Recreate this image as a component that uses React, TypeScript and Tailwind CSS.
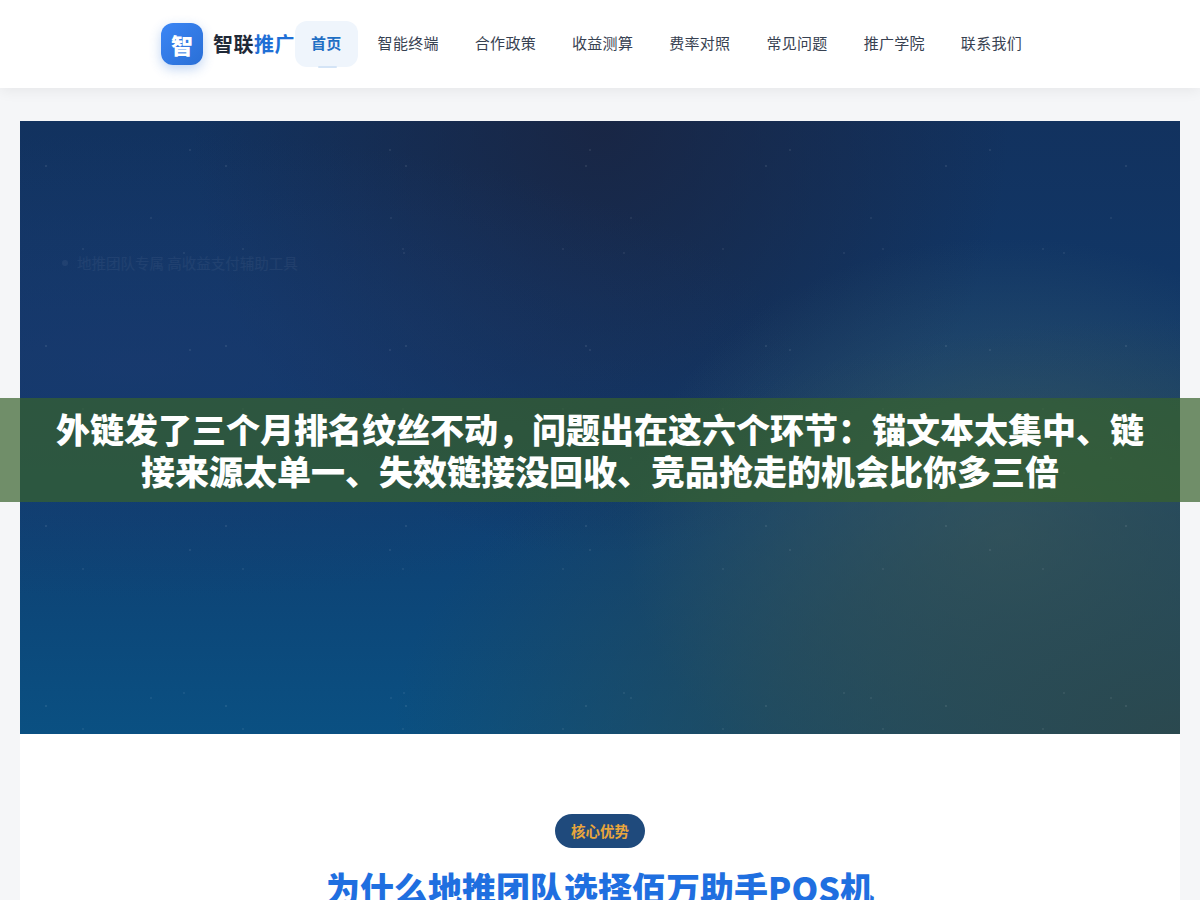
const font = "font-['Noto_Sans_CJK_SC','Noto_Sans',sans-serif]";

const navItems = ["智能终端", "合作政策", "收益测算", "费率对照", "常见问题", "推广学院", "联系我们"];

const App = () => {
  return (
    <div className={`relative h-[900px] overflow-hidden bg-[#f5f6f8] ${font}`}>
      {/* header */}
      <header className="flex h-[88px] items-center bg-white pl-[161px] shadow-[0_2px_14px_rgba(0,0,0,0.07)]">
        <div className="flex h-[42px] w-[42px] items-center justify-center rounded-xl bg-gradient-to-br from-[#3b86f5] to-[#2a6fd6] text-[22px] font-black text-white shadow-[0_4px_12px_rgba(42,111,214,0.3)]">
          智
        </div>
        <div className="ml-[10px] w-[82px] text-[20px] leading-none font-bold tracking-[0.5px] whitespace-nowrap text-[#1f2937]">
          智联<span className="text-[#1f6fd6]">推广</span>
        </div>

        <nav className="flex items-center gap-1">
          <div className="relative flex h-[46px] items-center rounded-xl bg-[#eff5fc] px-4 pb-[2px] text-[15px] font-bold tracking-[0.3px] text-[#1f6fc4]">
            首页
            <span className="absolute bottom-[-1px] left-[23px] h-[2px] w-[19px] rounded-sm bg-[#d4e4f6]" />
          </div>
          {navItems.map((item) => (
            <div key={item} className="flex h-[46px] items-center px-4 pb-[2px] text-[15px] tracking-[0.3px] text-[#374151]">
              {item}
            </div>
          ))}
        </nav>
      </header>

      <main className="px-5 pt-[33px]">
        {/* hero */}
        <section className="relative h-[613px] bg-[linear-gradient(180deg,#12325f_0%,#103a6c_50%,#0a5082_100%)]">
          {/* glows */}
          <div className="absolute inset-0 bg-[radial-gradient(ellipse_at_50%_0%,rgba(26,36,64,0.85)_0%,rgba(26,36,64,0)_50%)]" />
          <div className="absolute inset-0 bg-[radial-gradient(ellipse_at_10%_40%,rgba(28,58,112,0.6)_0%,rgba(28,58,112,0)_45%)]" />
          <div className="absolute inset-0 bg-[radial-gradient(ellipse_380px_300px_at_85%_68%,rgba(70,105,110,0.7)_0%,rgba(70,105,110,0)_100%)]" />
          <div className="absolute inset-0 bg-[radial-gradient(ellipse_at_100%_100%,rgba(44,72,76,0.95)_0%,rgba(44,72,76,0.6)_25%,rgba(44,72,76,0)_48%)]" />
          {/* dots */}
          <div className="absolute inset-0 bg-[radial-gradient(circle,rgba(255,255,255,0.08)_1px,transparent_1.5px)] bg-[length:180px_180px] bg-[position:-64px_-45px]" />
          <div className="absolute inset-0 bg-[radial-gradient(circle,rgba(255,255,255,0.07)_1px,transparent_1.5px)] bg-[length:200px_200px] bg-[position:70px_-71px]" />
          <div className="absolute inset-0 bg-[radial-gradient(circle,rgba(255,255,255,0.06)_1px,transparent_1.5px)] bg-[length:240px_240px] bg-[position:11px_-23px]" />
          <div className="absolute inset-0 bg-[radial-gradient(circle,rgba(255,255,255,0.06)_1px,transparent_1.5px)] bg-[length:160px_160px] bg-[position:-17px_48px]" />
          <div className="absolute inset-0 bg-[radial-gradient(circle,rgba(255,255,255,0.06)_1px,transparent_1.5px)] bg-[length:220px_220px] bg-[position:54px_22px]" />
          <div className="absolute top-[133px] left-[42px] flex items-center gap-[9px] text-[14.5px] leading-[18px] text-white/[0.05]">
            <span className="h-[6px] w-[6px] rounded-full bg-white/[0.05]" />
            地推团队专属 高收益支付辅助工具
          </div>
        </section>

        {/* advantages */}
        <section className="flex flex-col items-center bg-white pt-20 pb-16">
          <span className="flex h-[34px] w-[90px] items-center justify-center rounded-full bg-[#1f4a7c] pb-[1px] text-[14.5px] font-bold text-[#e9a63b]">
            核心优势
          </span>
          <h2 className="mt-[18px] text-[34px] leading-[44px] font-black text-[#1f6fe0]">为什么地推团队选择佰万助手POS机</h2>
        </section>
      </main>

      {/* overlay banner */}
      <div className="absolute top-[398px] right-0 left-0 flex h-[104px] items-center justify-center bg-[#37632c]/[0.7] px-5">
        <p className="max-w-[1100px] text-center text-[34px] leading-[42px] font-black text-white">
          外链发了三个月排名纹丝不动，问题出在这六个环节：锚文本太集中、链接来源太单一、失效链接没回收、竞品抢走的机会比你多三倍
        </p>
      </div>
    </div>
  );
};

export default App;
